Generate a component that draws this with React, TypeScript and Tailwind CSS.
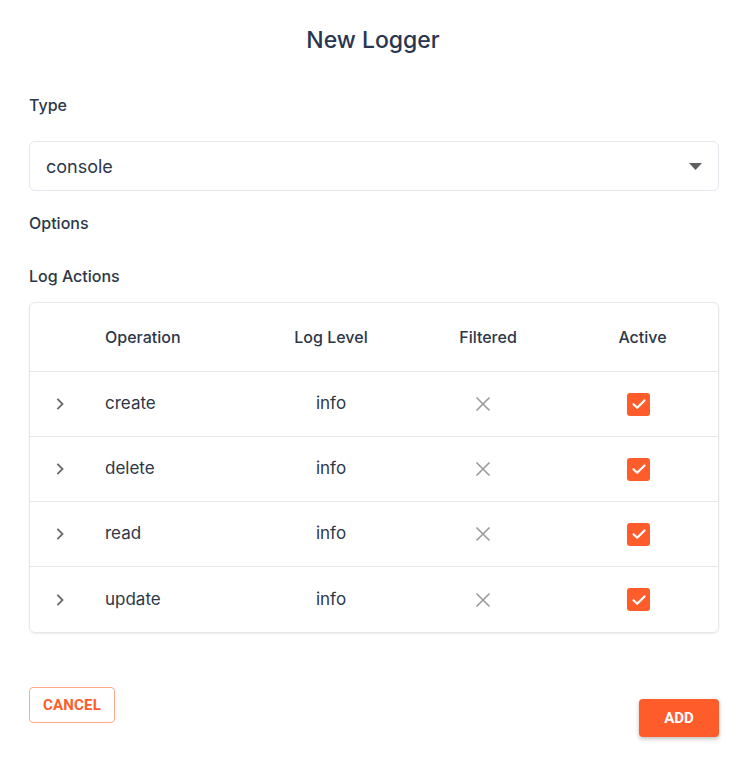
import React from "react";

const rows = ["create", "delete", "read", "update"];

function Chevron() {
  return (
    <svg width="10" height="14" viewBox="0 0 10 14" fill="none">
      <path d="M3 2.5 L7.5 7 L3 11.5" stroke="#6b6b6b" strokeWidth="1.8" strokeLinecap="square" />
    </svg>
  );
}

function XIcon() {
  return (
    <svg width="16" height="16" viewBox="0 0 16 16" fill="none">
      <path d="M1.5 1.5 L14.5 14.5 M14.5 1.5 L1.5 14.5" stroke="#9a9a9a" strokeWidth="1.6" />
    </svg>
  );
}

function Check() {
  return (
    <div className="w-[23px] h-[23px] rounded-[3px] bg-[#ff5c2c] flex items-center justify-center">
      <svg width="16" height="16" viewBox="0 0 16 16" fill="none">
        <path d="M2.5 8.3 L6.2 11.8 L13.5 4.5" stroke="#ffffff" strokeWidth="2.2" strokeLinecap="round" strokeLinejoin="round" />
      </svg>
    </div>
  );
}

export default function App() {
  return (
    <div className="w-[746px] h-[758px] bg-white text-[#2d3748] px-[29px]" style={{ fontFamily: "Inter, Roboto, sans-serif" }}>
      <h1 className="pt-[25px] text-center text-[23px] leading-[30px] font-medium text-[#2a3650]">New Logger</h1>

      <div className="mt-[38px] text-[16px] leading-[24px] font-medium">Type</div>

      <div className="mt-[24px] h-[50px] w-[690px] border border-[#e3e6ec] rounded-[6px] flex items-center justify-between pl-[16px] pr-[16px]">
        <span className="text-[18px] text-[#2d3748]">console</span>
        <svg width="13" height="7" viewBox="0 0 13 7"><path d="M0 0 L13 0 L6.5 7 Z" fill="#5f5f5f" /></svg>
      </div>

      <div className="mt-[20px] text-[16px] leading-[24px] font-medium">Options</div>
      <div className="mt-[29px] text-[16px] leading-[24px] font-medium">Log Actions</div>

      <div className="mt-[14px] w-[690px] border border-[#e5e7eb] rounded-[6px] shadow-[0_1px_2px_rgba(0,0,0,0.08)]">
        <div className="grid grid-cols-[60px_163px_156px_158px_1fr] h-[69px] items-center border-b border-[#e5e7eb] text-[16px] font-medium">
          <div />
          <div className="pl-[15px]">Operation</div>
          <div className="text-center">Log Level</div>
          <div className="text-center">Filtered</div>
          <div className="text-center">Active</div>
        </div>
        {rows.map((r, i) => (
          <div
            key={r}
            className={`grid grid-cols-[60px_163px_156px_158px_1fr] h-[65px] items-center text-[17px] ${i < rows.length - 1 ? "border-b border-[#e5e7eb]" : ""}`}
          >
            <div className="flex justify-center"><Chevron /></div>
            <div className="pl-[15px]">{r}</div>
            <div className="text-center">info</div>
            <div className="flex justify-center pr-[10px]"><XIcon /></div>
            <div className="flex justify-center pr-[8px]"><Check /></div>
          </div>
        ))}
      </div>

      <div className="mt-[54px] flex justify-between items-start w-[690px]">
        <button className="h-[36px] w-[86px] border border-[#ffa98a] rounded-[4px] text-[#ff5c2c] text-[15px] font-bold tracking-[0.2px]" style={{ fontFamily: "Roboto, sans-serif" }}>CANCEL</button>
        <button className="mt-[12px] h-[38px] w-[80px] rounded-[4px] bg-[#ff5c2c] text-white text-[15px] font-bold shadow-[0_2px_4px_rgba(0,0,0,0.25)]" style={{ fontFamily: "Roboto, sans-serif" }}>ADD</button>
      </div>
    </div>
  );
}
